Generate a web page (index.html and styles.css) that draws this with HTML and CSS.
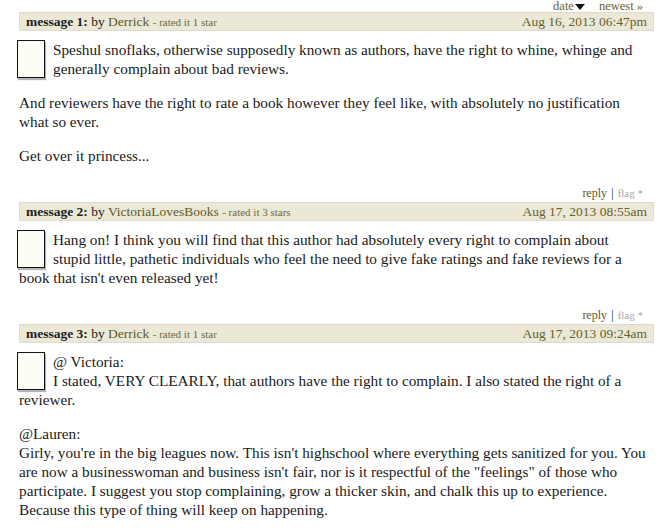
FILE: index.html
```html
<!DOCTYPE html>
<html>
<head>
<meta charset="utf-8">
<link rel="stylesheet" href="styles.css">
</head>
<body>
<div class="thread">
  <div class="sort"><a class="sortlink">date<span class="caret"></span></a><a class="sortlink">newest »</a></div>

  <div class="comment">
    <div class="head">
      <div class="who"><b>message 1:</b> by <a class="user">Derrick</a> <span class="rated">- rated it 1 star</span></div>
      <div class="date">Aug 16, 2013 06:47pm</div>
    </div>
    <div class="body">
      <div class="avatar"></div>
      <p>Speshul snoflaks, otherwise supposedly known as authors, have the right to whine, whinge and generally complain about bad reviews.</p>
      <p>And reviewers have the right to rate a book however they feel like, with absolutely no justification what so ever.</p>
      <p>Get over it princess...</p>
    </div>
    <div class="actions"><a class="reply">reply</a><span class="sep">|</span><a class="flag">flag *</a></div>
  </div>

  <div class="comment">
    <div class="head">
      <div class="who"><b>message 2:</b> by <a class="user">VictoriaLovesBooks</a> <span class="rated">- rated it 3 stars</span></div>
      <div class="date">Aug 17, 2013 08:55am</div>
    </div>
    <div class="body">
      <div class="avatar"></div>
      <p>Hang on! I think you will find that this author had absolutely every right to complain about stupid little, pathetic individuals who feel the need to give fake ratings and fake reviews for a book that isn't even released yet!</p>
    </div>
    <div class="actions"><a class="reply">reply</a><span class="sep">|</span><a class="flag">flag *</a></div>
  </div>

  <div class="comment">
    <div class="head">
      <div class="who"><b>message 3:</b> by <a class="user">Derrick</a> <span class="rated">- rated it 1 star</span></div>
      <div class="date">Aug 17, 2013 09:24am</div>
    </div>
    <div class="body">
      <div class="avatar"></div>
      <p>@ Victoria:<br>I stated, VERY CLEARLY, that authors have the right to complain. I also stated the right of a reviewer.</p>
      <p>@Lauren:<br>Girly, you're in the big leagues now. This isn't highschool where everything gets sanitized for you. You are now a businesswoman and business isn't fair, nor is it respectful of the "feelings" of those who participate. I suggest you stop complaining, grow a thicker skin, and chalk this up to experience. Because this type of thing will keep on happening.</p>
    </div>
  </div>
</div>
</body>
</html>
```

FILE: styles.css
```css
html, body {
  margin: 0;
  padding: 0;
  background: #ffffff;
}

body {
  font-family: "Liberation Serif", "Times New Roman", serif;
  color: #1a1a1a;
}

.thread {
  margin-left: 19px;
  width: 635px;
}

.sort {
  display: flex;
  justify-content: flex-end;
  align-items: flex-start;
  gap: 14px;
  padding-right: 11px;
  height: 12px;
  font-size: 12.5px;
  line-height: 12px;
  color: #66632e;
}

.caret {
  display: inline-block;
  width: 0;
  height: 0;
  border-left: 5px solid transparent;
  border-right: 5px solid transparent;
  border-top: 6px solid #111;
  margin-left: 1px;
}

.head {
  display: flex;
  justify-content: space-between;
  align-items: center;
  height: 17px;
  padding: 0 6px;
  background: #ebe8d8;
  border: 1px solid #dedbcb;
  font-size: 13.5px;
  line-height: 17px;
  color: #222;
}

.who b {
  font-weight: bold;
  color: #222;
}

.user {
  color: #5f5b26;
}

.rated {
  font-size: 11px;
  color: #6d6a45;
}

.date {
  color: #66622b;
}

.body {
  padding: 9px 7px 0 0;
  font-size: 15.25px;
  line-height: 19px;
}

.body::after {
  content: "";
  display: block;
  clear: both;
}

.avatar {
  float: left;
  width: 26px;
  height: 36px;
  margin: 0 8px 0 -2px;
  border: 1px solid #111;
  background: #fdfdf6;
  box-shadow: 1px 2px 1px #b5b5b5;
}

.body p {
  margin: 0 0 15px;
}

.body p:first-of-type {
  margin-top: 0;
}

.actions {
  display: flex;
  justify-content: flex-end;
  align-items: center;
  gap: 4px;
  padding-right: 11px;
  margin-top: 5px;
  height: 16px;
  font-size: 12px;
  line-height: 14px;
  margin-bottom: 1px;
}

.reply {
  color: #5f5b26;
}

.sep {
  color: #1b3a8c;
  font-size: 13px;
}

.flag {
  color: #a8a8a8;
  font-size: 11px;
}
```
